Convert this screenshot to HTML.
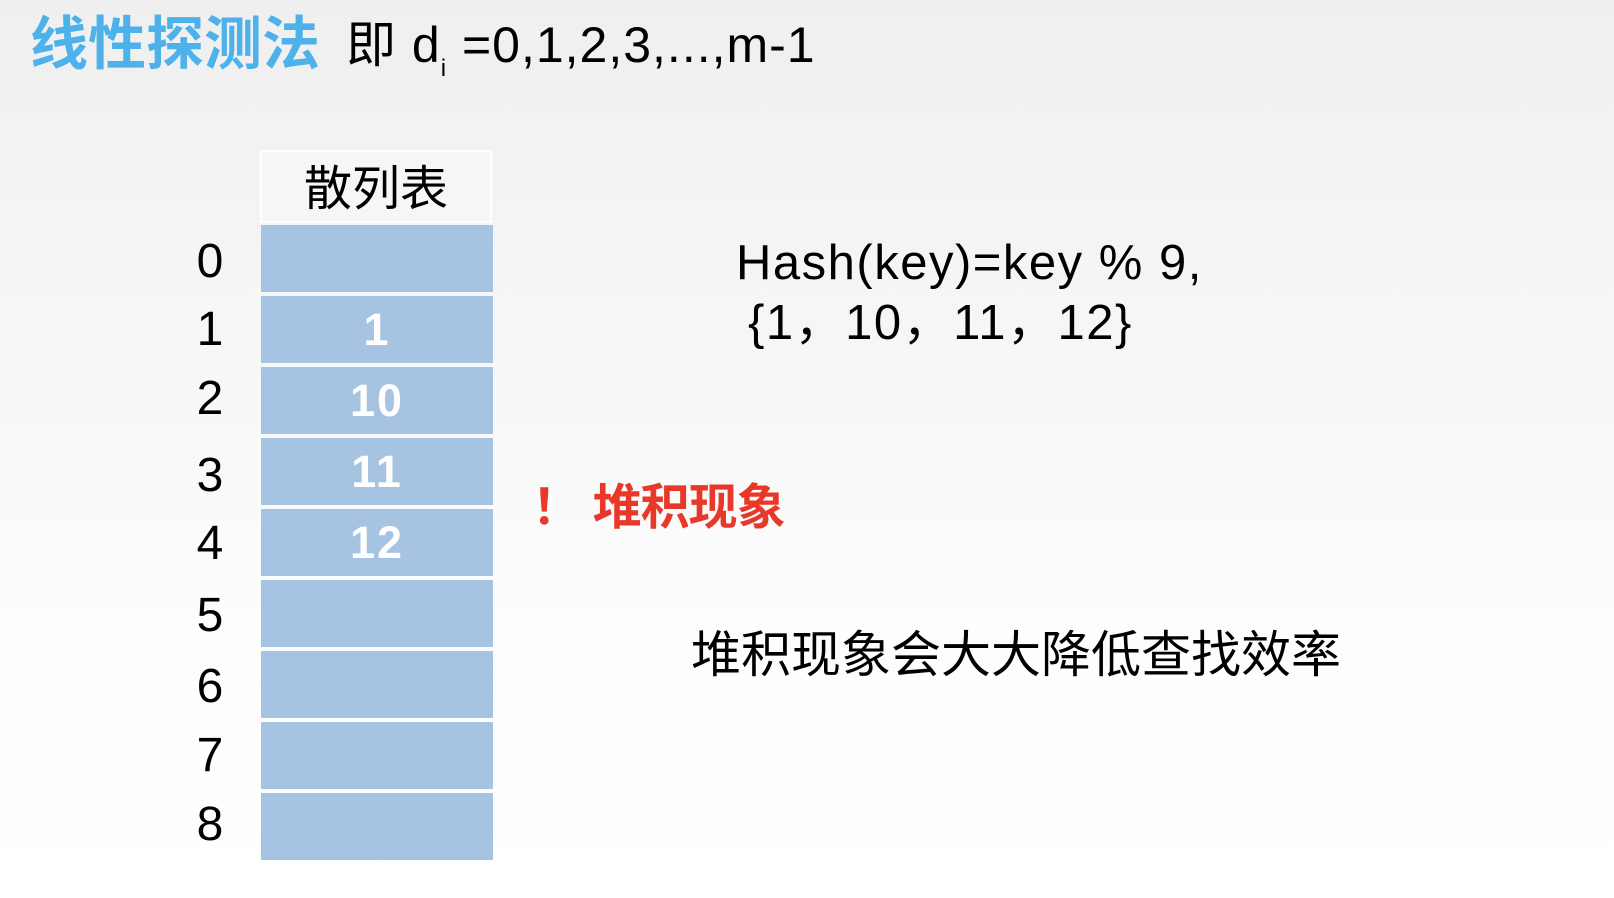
<!DOCTYPE html>
<html><head><meta charset="utf-8"><style>
body{margin:0;width:1614px;height:898px;overflow:hidden;background:linear-gradient(#efefef,#f7f7f7 40%,#fdfdfd 70%,#fff);font-family:"Liberation Sans","Noto Sans CJK SC",sans-serif;position:relative}
.a{position:absolute;white-space:nowrap;line-height:1}
.cell{position:absolute;left:261px;width:232px;height:67px;background:#a6c3e2;color:#fff;font-weight:bold;font-size:45px;letter-spacing:2px;text-align:center;line-height:67px}
.idx{position:absolute;left:190px;width:40px;text-align:center;font-size:48px;color:#000;line-height:67px}
</style></head><body>
<div class="a" style="left:30px;top:16px;font-size:58px;font-weight:bold;color:#4db1ea">线性探测法</div>
<div class="a" style="left:346px;top:20px;font-size:50px;color:#000;letter-spacing:1px">即 d<span style="font-size:24px;vertical-align:-14px">i</span> =0,1,2,3,...,m-1</div>
<div class="a" style="left:260px;top:150px;width:232px;height:73px;background:#f6f6f6;border:2px solid #fff;box-sizing:border-box;text-align:center;font-size:48px;line-height:76px;color:#000">散列表</div>
<div class="cell" style="top:225px"></div><div class="idx" style="top:228px">0</div>
<div class="cell" style="top:296px">1</div><div class="idx" style="top:296px">1</div>
<div class="cell" style="top:367px">10</div><div class="idx" style="top:365px">2</div>
<div class="cell" style="top:438px">11</div><div class="idx" style="top:442px">3</div>
<div class="cell" style="top:509px">12</div><div class="idx" style="top:510px">4</div>
<div class="cell" style="top:580px"></div><div class="idx" style="top:582px">5</div>
<div class="cell" style="top:651px"></div><div class="idx" style="top:653px">6</div>
<div class="cell" style="top:722px"></div><div class="idx" style="top:722px">7</div>
<div class="cell" style="top:793px"></div><div class="idx" style="top:791px">8</div>
<div class="a" style="left:736px;top:239px;font-size:49px;color:#000;letter-spacing:1.5px">Hash(key)=key % 9,</div>
<div class="a" style="left:748px;top:299px;font-size:49px;color:#000;letter-spacing:1.5px">{1，10，11，12}</div>
<div class="a" style="left:532px;top:484px;font-size:49px;font-weight:bold;color:#e8382a;letter-spacing:-1px">！ 堆积现象</div>
<div class="a" style="left:691px;top:630px;font-size:50px;color:#000">堆积现象会大大降低查找效率</div>
</body></html>
